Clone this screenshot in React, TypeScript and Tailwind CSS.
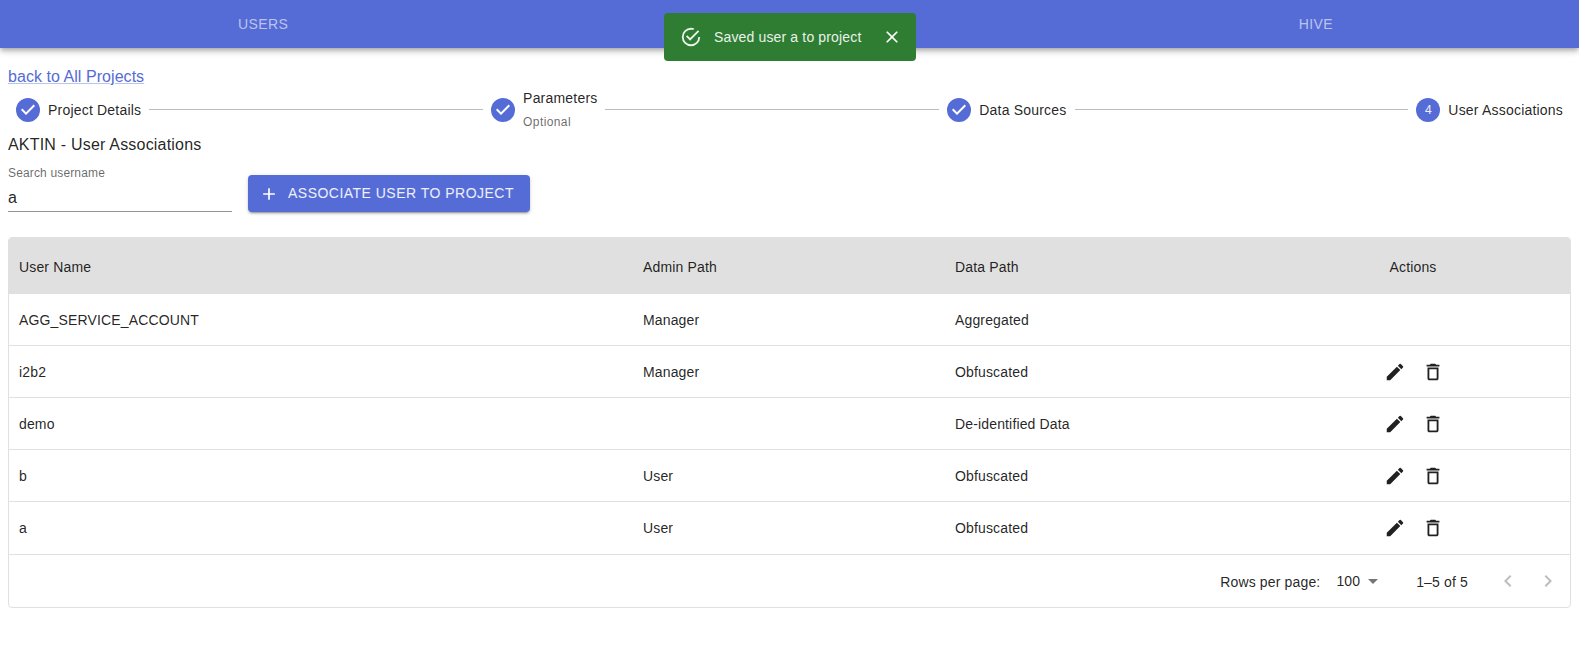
const P = {
  check: "M12 0a12 12 0 1 0 0 24 12 12 0 0 0 0-24zm-2 17l-5-5 1.4-1.4 3.6 3.6 7.6-7.6L19 8l-9 9z",
  success: "M20,12A8,8 0 0,1 12,20A8,8 0 0,1 4,12A8,8 0 0,1 12,4C12.76,4 13.5,4.11 14.2, 4.31L15.77,2.74C14.61,2.26 13.34,2 12,2A10,10 0 0,0 2,12A10,10 0 0,0 12,22A10,10 0 0,0 22,12M7.91,10.08L6.5,11.5L11,16L21,6L19.59,4.58L11,13.17L7.91,10.08Z",
  close: "M19 6.41 17.59 5 12 10.59 6.41 5 5 6.41 10.59 12 5 17.59 6.41 19 12 13.41 17.59 19 19 17.59 13.41 12z",
  add: "M19 13h-6v6h-2v-6H5v-2h6V5h2v6h6v2z",
  edit: "M3 17.25V21h3.75L17.81 9.94l-3.75-3.75L3 17.25zM20.71 7.04c.39-.39.39-1.02 0-1.41l-2.34-2.34a.9959.9959 0 0 0-1.41 0l-1.83 1.83 3.75 3.75 1.83-1.83z",
  del: "M16 9v10H8V9h8m-1.5-6h-5l-1 1H5v2h14V4h-3.5l-1-1zM18 7H6v12c0 1.1.9 2 2 2h8c1.1 0 2-.9 2-2V7z",
  left: "M15.41 16.59 10.83 12l4.58-4.59L14 6l-6 6 6 6 1.41-1.41z",
  right: "M8.59 16.59 13.17 12 8.59 7.41 10 6l6 6-6 6-1.41-1.41z",
  drop: "M7 10l5 5 5-5z",
};

function Icon({ d, className }: { d: string; className: string }) {
  return (
    <svg viewBox="0 0 24 24" fill="currentColor" className={className}>
      <path d={d} />
    </svg>
  );
}

function Connector() {
  return <div className="flex-1 h-px bg-[#bdbdbd] -mt-[2px]" />;
}

function Step({ label, optional, num }: { label: string; optional?: string; num?: string }) {
  return (
    <div className="flex items-center px-2 shrink-0">
      {num ? (
        <div className="w-6 h-6 rounded-full bg-[#556cd6] text-white/90 text-[12px] flex items-center justify-center">{num}</div>
      ) : (
        <Icon d={P.check} className="w-6 h-6 text-[#556cd6]" />
      )}
      <div className="pl-2">
        <div className="text-[14px] leading-[20px] tracking-[0.2px] text-black/87">{label}</div>
        {optional && <div className="text-[12px] leading-[28px] tracking-[0.4px] text-black/60 -mb-1">{optional}</div>}
      </div>
    </div>
  );
}

const rows = [
  { n: "AGG_SERVICE_ACCOUNT", a: "Manager", d: "Aggregated", actions: false, h: "h-[52px]" },
  { n: "i2b2", a: "Manager", d: "Obfuscated", actions: true, h: "h-[52px]" },
  { n: "demo", a: "", d: "De-identified Data", actions: true, h: "h-[52px]" },
  { n: "b", a: "User", d: "Obfuscated", actions: true, h: "h-[52px]" },
  { n: "a", a: "User", d: "Obfuscated", actions: true, h: "h-[53px] pb-px" },
];

const cols = "grid grid-cols-[624px_312px_312px_312px] items-center";

export default function App() {
  return (
    <div className="relative min-h-[662px] bg-white font-['Liberation_Sans',sans-serif] text-[#000000de]">
      <header className="h-12 bg-[#556cd6] grid grid-cols-3 items-center text-center text-[14px] tracking-[0.4px] text-white/60 shadow-[0_2px_4px_-1px_rgba(0,0,0,0.2),0_4px_5px_0_rgba(0,0,0,0.14),0_1px_10px_0_rgba(0,0,0,0.12)]">
        <div>USERS</div>
        <div>PROJECTS</div>
        <div>HIVE</div>
      </header>

      <div className="absolute top-[13px] left-[664px] w-[252px] h-12 rounded bg-[#2e7d32] text-white flex items-center pl-4 pr-[14px] text-[14px] tracking-[0.15px]">
        <Icon d={P.success} className="w-[22px] h-[22px] opacity-90" />
        <span className="ml-3 opacity-90">Saved user a to project</span>
        <Icon d={P.close} className="w-5 h-5 ml-auto" />
      </div>

      <main className="px-2 pt-[17px]">
        <a className="block text-[16px] leading-6 tracking-[0.05px] text-[#556cd6] underline decoration-[#556cd666]">back to All Projects</a>
        <nav className="flex items-center h-[44px] -mt-px">
          <Step label="Project Details" />
          <Connector />
          <Step label="Parameters" optional="Optional" />
          <Connector />
          <Step label="Data Sources" />
          <Connector />
          <Step label="User Associations" num="4" />
        </nav>
        <h1 className="text-[16px] leading-6 font-normal tracking-[0.2px] mt-px">AKTIN - User Associations</h1>
        <div className="flex items-end mt-[8px]">
          <div className="w-[224px] border-b border-[#949494]">
            <div className="text-[12px] leading-4 tracking-[0.15px] text-black/60">Search username</div>
            <div className="text-[16px] leading-6 pt-[5px] pb-[1px]">a</div>
          </div>
          <button className="ml-4 h-[37px] w-[282px] rounded bg-[#556cd6] text-white/90 text-[14px] tracking-[0.48px] flex items-center pl-[11px] shadow-[0_3px_1px_-2px_rgba(0,0,0,0.2),0_2px_2px_0_rgba(0,0,0,0.14),0_1px_5px_0_rgba(0,0,0,0.12)]">
            <Icon d={P.add} className="w-5 h-5 mr-[9px] text-white" />
            ASSOCIATE USER TO PROJECT
          </button>
        </div>

        <section className="mt-[25px] w-[1563px] border border-[#e0e0e0] rounded text-[14px] tracking-[0.15px] overflow-hidden">
          <div className={`${cols} h-[56px] bg-[#e0e0e0] pt-0.5`}>
            <div className="pl-2.5">User Name</div>
            <div className="pl-2.5">Admin Path</div>
            <div className="pl-2.5">Data Path</div>
            <div className="text-center">Actions</div>
          </div>
          {rows.map((r) => (
            <div key={r.n} className={`${cols} ${r.h} border-b border-[#e0e0e0]`}>
              <div className="pl-2.5 pt-0.5">{r.n}</div>
              <div className="pl-2.5 pt-0.5">{r.a}</div>
              <div className="pl-2.5 pt-0.5">{r.d}</div>
              {r.actions ? (
                <div className="flex justify-center gap-[16px] pl-[2px] text-[#000000de]">
                  <Icon d={P.edit} className="w-[22px] h-[22px]" />
                  <Icon d={P.del} className="w-[22px] h-[22px]" />
                </div>
              ) : (
                <div />
              )}
            </div>
          ))}
          <div className="h-[52px] flex items-center text-[14px]">
            <div className="ml-auto flex items-center">
              <span className="pt-0.5">Rows per page:</span>
              <span className="ml-4">100</span>
              <Icon d={P.drop} className="w-6 h-6 text-black/54 ml-px" />
              <span className="ml-[31px] pt-0.5">1–5 of 5</span>
              <Icon d={P.left} className="w-6 h-6 text-black/26 ml-[28px]" />
              <Icon d={P.right} className="w-6 h-6 text-black/26 ml-4 mr-[10px]" />
            </div>
          </div>
        </section>
      </main>
    </div>
  );
}
